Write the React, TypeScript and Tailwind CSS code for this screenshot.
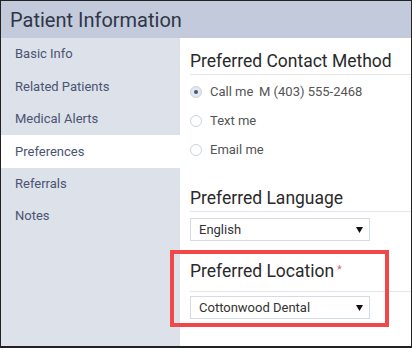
const navItems = ['Basic Info', 'Related Patients', 'Medical Alerts', 'Preferences', 'Referrals', 'Notes']

const contactOptions = [
  { label: 'Call me', detail: 'M (403) 555-2468', checked: true },
  { label: 'Text me', detail: '', checked: false },
  { label: 'Email me', detail: '', checked: false },
]

function Radio({ checked }: { checked: boolean }) {
  return checked ? (
    <span className="flex h-[12px] w-[12px] shrink-0 items-center justify-center rounded-full border border-[#c9d2dc] bg-[#e3e8ee]">
      <span className="h-[4px] w-[4px] rounded-full bg-[#3f5a7c]" />
    </span>
  ) : (
    <span className="h-[12px] w-[12px] shrink-0 rounded-full border border-[#cbd3dc] bg-white" />
  )
}

function Select({ value }: { value: string }) {
  return (
    <div className="flex h-[23px] w-[180px] items-center justify-between border border-[#d3dce5] bg-white pl-[8px] pr-[6px] text-[13px] text-[#333]">
      <span>{value}</span>
      <svg width="7" height="6" viewBox="0 0 7 6">
        <path d="M0 0H7L3.5 6Z" fill="#111" />
      </svg>
    </div>
  )
}

export default function App() {
  return (
    <div
      className="relative flex h-[348px] w-[412px] flex-col border border-b-2 border-[#222] bg-white"
      style={{ fontFamily: 'Roboto, "Liberation Sans", sans-serif' }}
    >
      <div className="flex h-[37px] shrink-0 items-center bg-[#c2cadb] pl-[9px] text-[20px] text-[#2f3646]">
        Patient Information
      </div>

      <div className="flex flex-1">
        <nav className="w-[179px] shrink-0 bg-[#dde1ea]">
          {navItems.map((item) => (
            <div
              key={item}
              className={`flex h-[32.4px] items-center pl-[14px] text-[13px] text-[#4a5472] ${
                item === 'Preferences' ? 'bg-white' : ''
              }`}
            >
              {item}
            </div>
          ))}
        </nav>

        <main className="flex-1 pl-[10px] pt-[12px]">
          <h2 className="border-b border-[#e6e6e6] pb-[2px] text-[17.5px] leading-[22px] text-[#2a2a2a]">
            Preferred Contact Method
          </h2>
          <div className="mt-[2px]">
            {contactOptions.map((opt) => (
              <div key={opt.label} className="flex h-[29px] items-center whitespace-nowrap text-[13px] text-[#555]">
                <Radio checked={opt.checked} />
                <span className="ml-[8px] w-[49px] shrink-0">{opt.label}</span>
                {opt.detail && <span>{opt.detail}</span>}
              </div>
            ))}
          </div>

          <h2 className="mt-[23px] border-b border-[#e6e6e6] pb-[2px] text-[17.5px] leading-[22px] text-[#2a2a2a]">
            Preferred Language
          </h2>
          <div className="mt-[6px]">
            <Select value="English" />
          </div>

          <h2 className="mt-[19px] border-b border-[#e6e6e6] pb-[6px] text-[17.5px] leading-[22px] text-[#2a2a2a]">
            Preferred Location
            <span className="relative top-[-4px] ml-[3px] text-[10px] text-[#e25a6e]">*</span>
          </h2>
          <div className="mt-[4px]">
            <Select value="Cottonwood Dental" />
          </div>
        </main>
      </div>

      <div className="pointer-events-none absolute left-[169px] top-[249px] h-[77px] w-[219px] border-4 border-[#f04848]" />
    </div>
  )
}
